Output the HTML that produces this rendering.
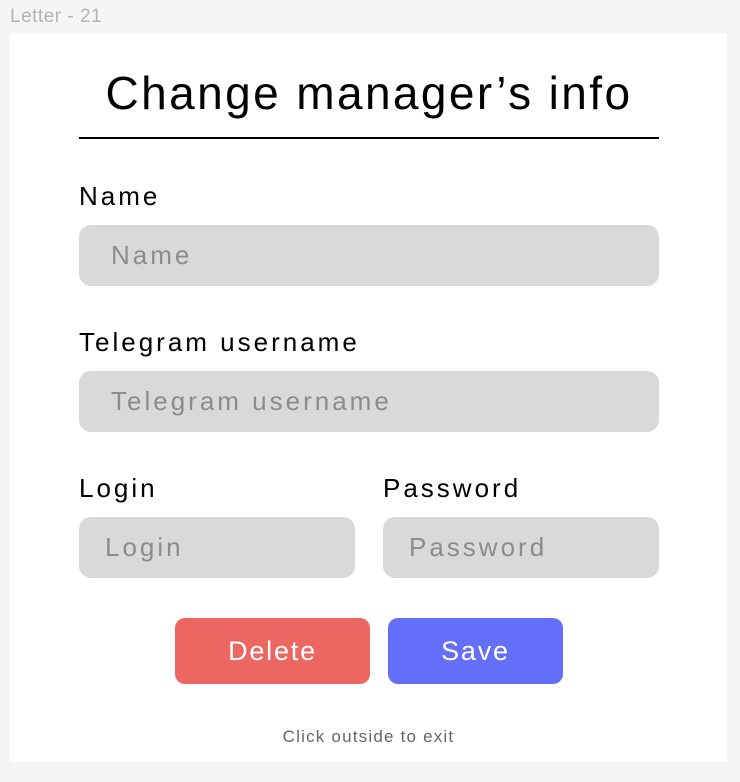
<!DOCTYPE html>
<html><head><style>
*{margin:0;padding:0;box-sizing:border-box}
body{width:740px;height:782px;background:#f5f5f5;position:relative;font-family:"Liberation Sans",sans-serif;overflow:hidden}
.abs{position:absolute}
.frame{left:10px;top:33px;width:717px;height:729px;background:#fff}
.lbl{font-size:26px;color:#000;line-height:30px;letter-spacing:3px}
.inp{background:#d9d9d9;border-radius:12px;height:61px;font-size:26px;color:#8c8c8c;line-height:61px;letter-spacing:3px}
.btn{border-radius:10px;height:66px;color:#fff;font-size:27px;line-height:66px;text-align:center;letter-spacing:1.8px}
</style></head><body>
<div class="abs" style="left:10px;top:6px;font-size:19px;color:#b3b3b3;letter-spacing:0.5px">Letter - 21</div>
<div class="abs frame"></div>
<div class="abs" style="left:79px;width:580px;top:66px;text-align:center;font-size:46px;line-height:54px;color:#000;letter-spacing:2.4px">Change manager’s info</div>
<div class="abs" style="left:79px;top:137px;width:580px;height:2px;background:#000"></div>
<div class="abs lbl" style="left:79px;top:181px">Name</div>
<div class="abs inp" style="left:79px;top:225px;width:580px;padding-left:32px">Name</div>
<div class="abs lbl" style="left:79px;top:327px">Telegram username</div>
<div class="abs inp" style="left:79px;top:371px;width:580px;padding-left:32px">Telegram username</div>
<div class="abs lbl" style="left:79px;top:473px">Login</div>
<div class="abs inp" style="left:79px;top:517px;width:276px;padding-left:26px">Login</div>
<div class="abs lbl" style="left:383px;top:473px">Password</div>
<div class="abs inp" style="left:383px;top:517px;width:276px;padding-left:26px">Password</div>
<div class="abs btn" style="left:175px;top:618px;width:195px;background:#ec6762">Delete</div>
<div class="abs btn" style="left:388px;top:618px;width:175px;background:#646ff9">Save</div>
<div class="abs" style="left:10px;width:717px;top:727px;text-align:center;font-size:17px;color:#666;letter-spacing:1.2px">Click outside to exit</div>
</body></html>
